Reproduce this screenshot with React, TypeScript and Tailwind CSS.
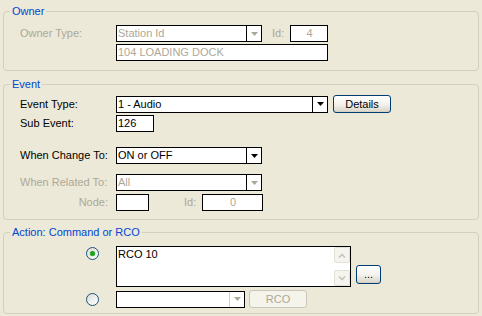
import React from "react";

const dis = "text-[#ACA899]";

function Arrow({ disabled, light }: { disabled?: boolean; light?: boolean }) {
  return (
    <div
      className={`w-[15px] h-full border-l ${light ? "border-[#D4D2C6]" : "border-black"} flex items-center justify-center`}
    >
      <svg width="7" height="4" viewBox="0 0 7 4">
        <path d="M0 0h7L3.5 4z" fill={disabled ? "#ACA899" : "#000"} />
      </svg>
    </div>
  );
}

function Combo({
  className,
  text,
  disabled,
  light,
}: {
  className: string;
  text?: string;
  disabled?: boolean;
  light?: boolean;
}) {
  return (
    <div className={`flex h-[17px] border border-black bg-white ${className}`}>
      <div className={`flex-1 pl-[1px] flex items-center whitespace-nowrap overflow-hidden ${disabled ? dis : ""}`}>
        {text}
      </div>
      <Arrow disabled={disabled} light={light} />
    </div>
  );
}

function Box({ className, text, center, disabled }: { className: string; text?: string; center?: boolean; disabled?: boolean }) {
  return (
    <div
      className={`h-[17px] border border-black bg-white flex items-center pl-[1px] whitespace-nowrap ${center ? "justify-center pl-0" : ""} ${disabled ? dis : ""} ${className}`}
    >
      {text}
    </div>
  );
}

function XpButton({ className, children }: { className: string; children: React.ReactNode }) {
  return (
    <div
      className={`border border-[#003C74] rounded-[3px] bg-gradient-to-b from-white via-[#F4F3EE] to-[#D8D4C8] flex items-center justify-center shadow-[inset_0_-1px_0_#D6D0C5] ${className}`}
    >
      {children}
    </div>
  );
}

function Radio({ checked, className }: { checked?: boolean; className?: string }) {
  return (
    <div
      className={`w-[13px] h-[13px] rounded-full border border-[#1C5180] bg-gradient-to-br from-[#DCDCD7] to-white flex items-center justify-center ${className ?? ""}`}
    >
      {checked && <div className="w-[5px] h-[5px] rounded-full bg-[#21A121] shadow-[0_0_1px_#7BD67B]" />}
    </div>
  );
}

function ScrollBtn({ up }: { up?: boolean }) {
  return (
    <div className="h-[16px] rounded-[2px] border border-[#E3E1D6] bg-[#F5F4EF] flex items-center justify-center">
      <svg width="8" height="5" viewBox="0 0 8 5">
        <path
          d={up ? "M1 4.5L4 1.5L7 4.5" : "M1 0.5L4 3.5L7 0.5"}
          stroke="#C6C4B9"
          strokeWidth="1.6"
          fill="none"
        />
      </svg>
    </div>
  );
}

function Legend({ children }: { children: React.ReactNode }) {
  return <legend className="px-[2px] text-[#0046D5] leading-[13px]">{children}</legend>;
}

export default function App() {
  return (
    <div className="w-[482px] h-[316px] overflow-hidden bg-[#ECE9D8] font-['Liberation_Sans',Arial,sans-serif] text-[11px] leading-[13px] text-black pt-[5px]">
      {/* Owner */}
      <fieldset className="ml-[3px] w-[476px] border border-[#D0D0BF] rounded-[4px] px-[6px] pt-[7px] pb-[9px]">
        <Legend>Owner</Legend>
        <div className="pl-[10px]">
          <div className="flex items-center h-[17px]">
            <span className={`w-[96px] ${dis}`}>Owner Type:</span>
            <Combo className="w-[146px]" text="Station Id" disabled />
            <span className={`ml-[10px] w-[18px] ${dis}`}>Id:</span>
            <Box className="w-[38px]" text="4" center disabled />
          </div>
          <div className="flex mt-[2px] ml-[96px]">
            <Box className="w-[212px]" text="104 LOADING DOCK" disabled />
          </div>
        </div>
      </fieldset>

      {/* Event */}
      <fieldset className="ml-[3px] mt-[7px] w-[476px] border border-[#D0D0BF] rounded-[4px] px-[6px] pt-[4px] pb-[8px]">
        <Legend>Event</Legend>
        <div className="pl-[10px]">
          <div className="flex items-center h-[18px]">
            <span className="w-[96px]">Event Type:</span>
            <Combo className="w-[212px]" text="1 - Audio" />
            <XpButton className="ml-[5px] w-[58px] h-[18px]">Details</XpButton>
          </div>
          <div className="flex items-center mt-[2px]">
            <span className="w-[96px]">Sub Event:</span>
            <Box className="w-[38px]" text="126" />
          </div>
          <div className="flex items-center mt-[15px]">
            <span className="w-[96px]">When Change To:</span>
            <Combo className="w-[146px]" text="ON or OFF" />
          </div>
          <div className="flex items-center mt-[10px]">
            <span className={`w-[96px] ${dis}`}>When Related To:</span>
            <Combo className="w-[146px]" text="All" disabled />
          </div>
          <div className="flex items-center mt-[3px]">
            <span className={`w-[96px] text-right pr-[8px] ${dis}`}>Node:</span>
            <Box className="w-[33px]" />
            <span className={`ml-[35px] w-[18px] ${dis}`}>Id:</span>
            <Box className="w-[61px]" text="0" center disabled />
          </div>
        </div>
      </fieldset>

      {/* Action */}
      <fieldset className="ml-[3px] mt-[6px] w-[476px] border border-[#D0D0BF] rounded-[4px] px-[6px] pt-[7px] pb-[5px]">
        <Legend>Action: Command or RCO</Legend>
        <div className="pl-[10px]">
          <div className="flex items-start">
            <Radio checked className="ml-[66px] mt-[1px]" />
            <div className="ml-[17px] w-[235px] h-[41px] border border-black bg-white flex">
              <div className="flex-1 pl-[1px] pt-[1px]">RCO 10</div>
              <div className="w-[16px] flex flex-col justify-between">
                <ScrollBtn up />
                <ScrollBtn />
              </div>
            </div>
            <XpButton className="ml-[5px] w-[25px] h-[19px] self-end mb-[3px]">...</XpButton>
          </div>
          <div className="flex items-center mt-[3px] h-[18px]">
            <Radio className="ml-[66px]" />
            <Combo className="ml-[17px] w-[129px]" disabled light />
            <div className={`ml-[4px] w-[58px] h-[18px] border border-[#C9C7BA] rounded-[3px] bg-[#F5F4EA] flex items-center justify-center ${dis}`}>
              RCO
            </div>
          </div>
        </div>
      </fieldset>
    </div>
  );
}
